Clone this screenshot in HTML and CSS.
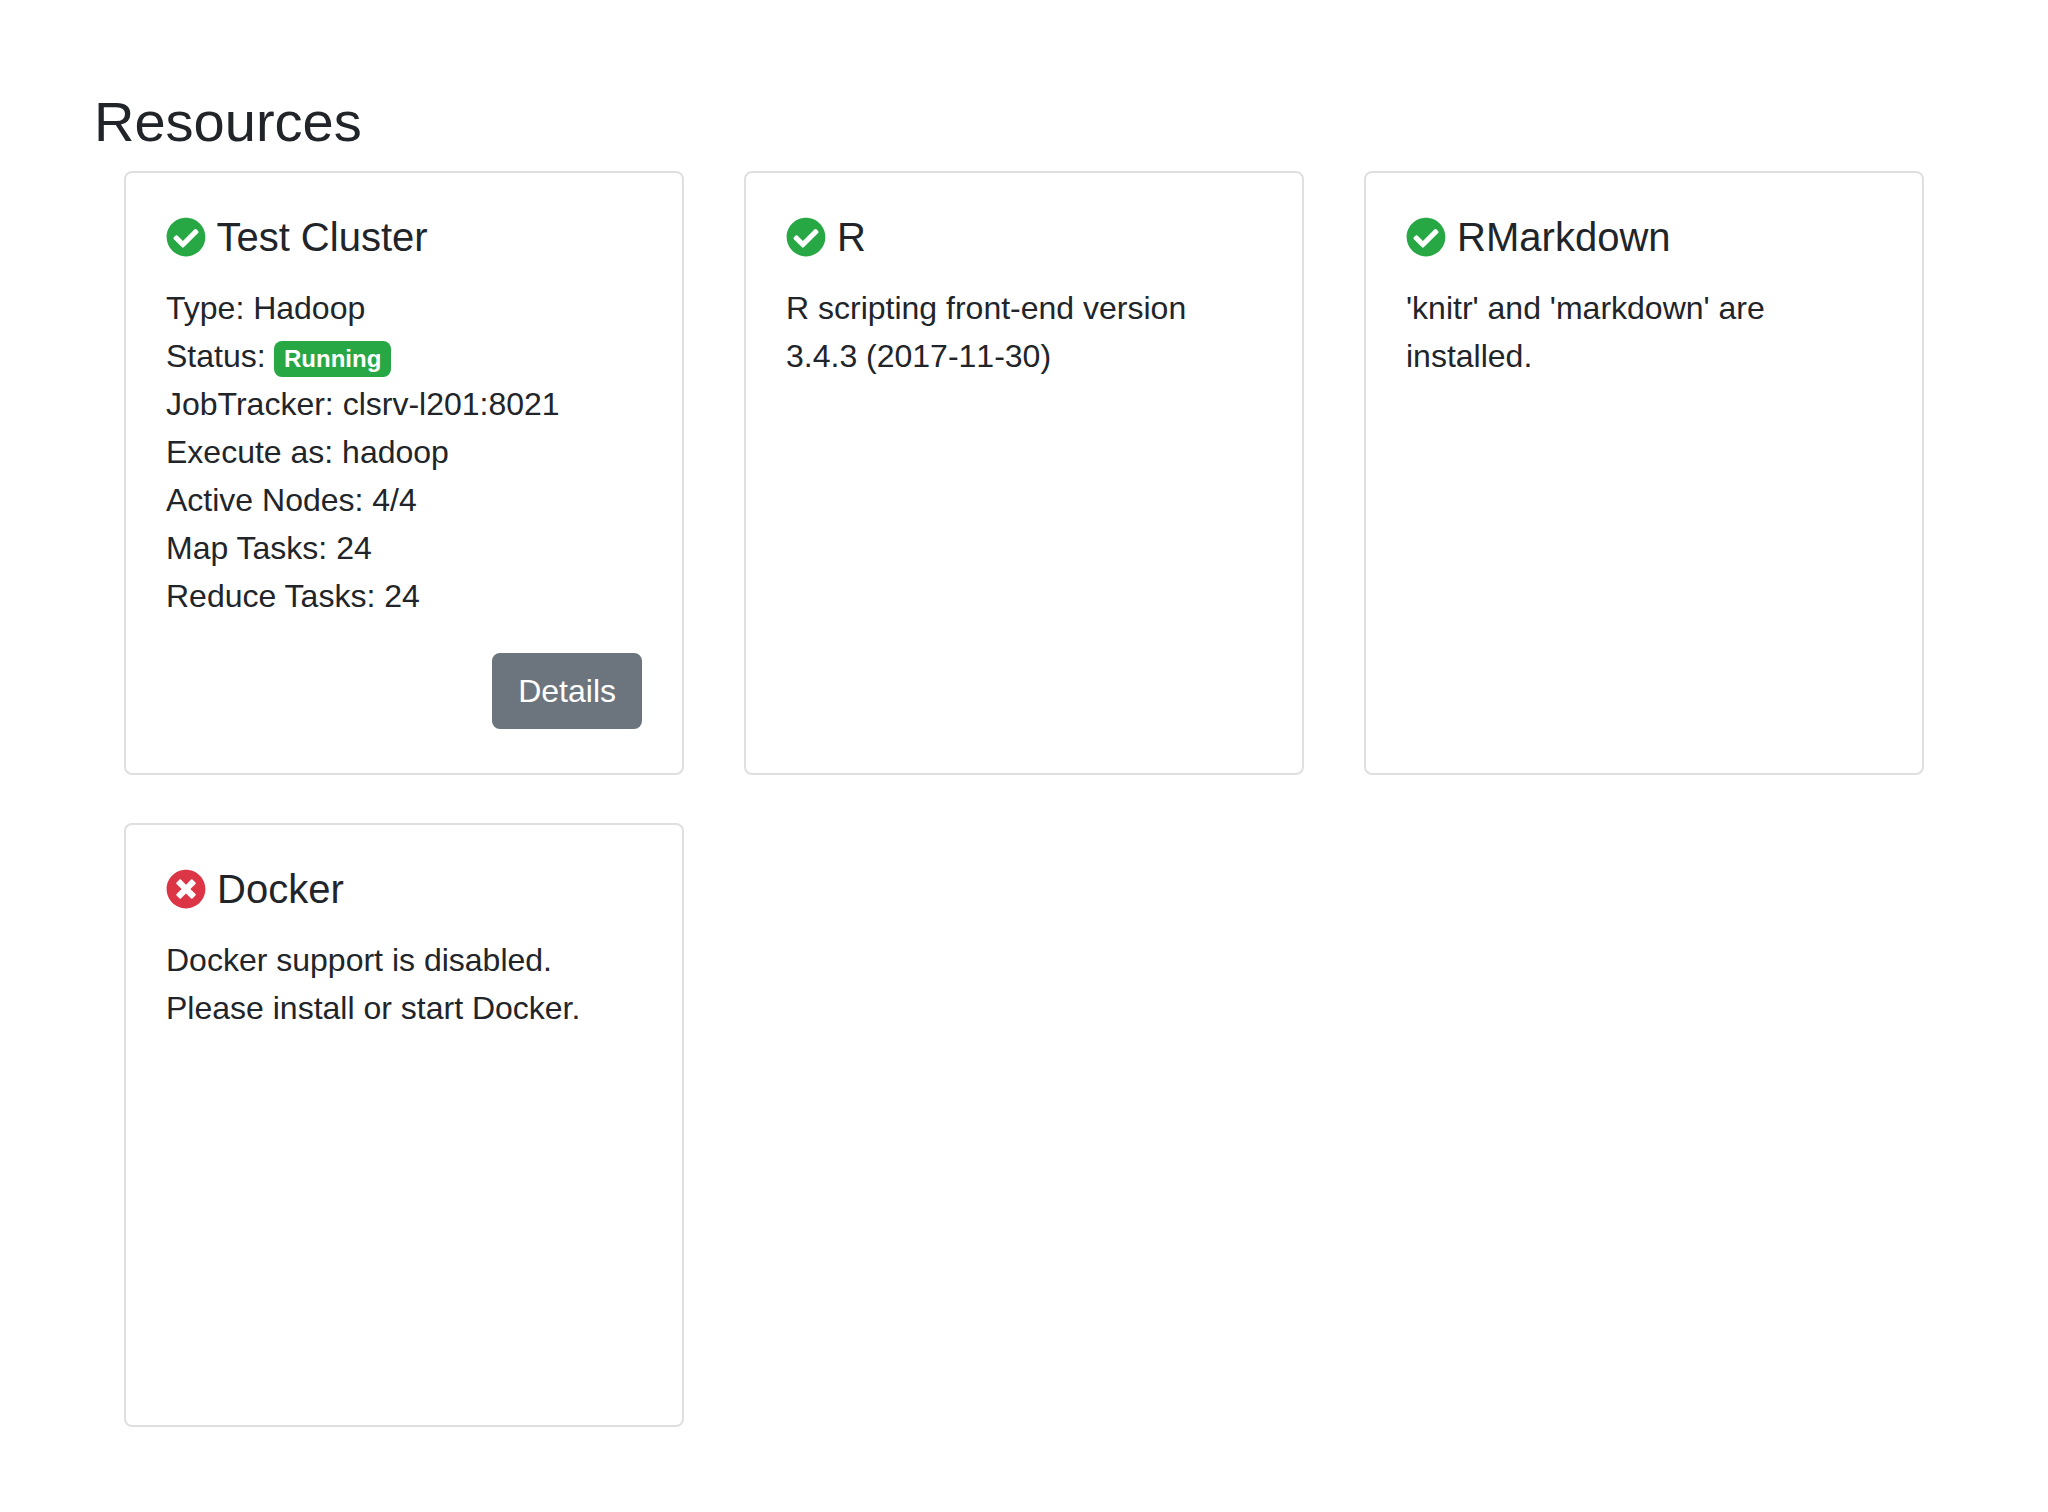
FILE: index.html
```html
<!DOCTYPE html>
<html lang="en">
<head>
<meta charset="utf-8">
<title>Resources</title>
<link rel="stylesheet" href="styles.css">
</head>
<body>
<svg class="sprite" aria-hidden="true">
  <symbol id="check" viewBox="0 0 512 512"><path fill="currentColor" d="M504 256c0 136.967-111.033 248-248 248S8 392.967 8 256 119.033 8 256 8s248 111.033 248 248zM227.314 387.314l184-184c6.248-6.248 6.248-16.379 0-22.627l-22.627-22.627c-6.248-6.249-16.379-6.249-22.628 0L216 308.118l-70.059-70.059c-6.248-6.248-16.379-6.248-22.628 0l-22.627 22.627c-6.248 6.248-6.248 16.379 0 22.627l104 104c6.249 6.249 16.379 6.249 22.628.001z"/></symbol>
  <symbol id="times" viewBox="0 0 512 512"><path fill="currentColor" d="M256 8C119 8 8 119 8 256s111 248 248 248 248-111 248-248S393 8 256 8zm121.6 313.1c4.7 4.7 4.7 12.3 0 17L338 377.6c-4.7 4.7-12.3 4.7-17 0L256 312l-65.1 65.6c-4.7 4.7-12.3 4.7-17 0L134.4 338c-4.7-4.7-4.7-12.3 0-17l65.6-65-65.6-65.1c-4.7-4.7-4.7-12.3 0-17l39.6-39.6c4.7-4.7 12.3-4.7 17 0l65 65.7 65.1-65.6c4.7-4.7 12.3-4.7 17 0l39.6 39.6c4.7 4.7 4.7 12.3 0 17L312 256l65.6 65.1z"/></symbol>
</svg>
<main class="page">
  <h1 class="page-title">Resources</h1>
  <div class="cards">
    <section class="card">
      <h2 class="card-title"><svg class="icon icon-ok"><use href="#check"/></svg> Test Cluster</h2>
      <div class="card-text">
        <div>Type: Hadoop</div>
        <div>Status: <span class="badge">Running</span></div>
        <div>JobTracker: clsrv-l201:8021</div>
        <div>Execute as: hadoop</div>
        <div>Active Nodes: 4/4</div>
        <div>Map Tasks: 24</div>
        <div>Reduce Tasks: 24</div>
      </div>
      <button class="btn" type="button">Details</button>
    </section>
    <section class="card">
      <h2 class="card-title"><svg class="icon icon-ok"><use href="#check"/></svg> R</h2>
      <div class="card-text">R scripting front-end version <span class="version">3.4.3 (2017-11-30)</span></div>
    </section>
    <section class="card">
      <h2 class="card-title"><svg class="icon icon-ok"><use href="#check"/></svg> RMarkdown</h2>
      <div class="card-text">'knitr' and 'markdown' are installed.</div>
    </section>
    <section class="card">
      <h2 class="card-title"><svg class="icon icon-error"><use href="#times"/></svg> Docker</h2>
      <div class="card-text">Docker support is disabled. Please install or start Docker.</div>
    </section>
  </div>
</main>
</body>
</html>
```
FILE: styles.css
```css
* {
  box-sizing: border-box;
}

body {
  margin: 0;
  background: #fff;
  color: #212529;
  font: 32px/48px "Liberation Sans", Arial, sans-serif;
}

.sprite {
  display: none;
}

.page {
  padding: 88px 94px 0;
}

.page-title {
  margin: 0 0 16px;
  font-size: 56px;
  font-weight: 400;
  line-height: 67px;
}

.cards {
  display: grid;
  grid-template-columns: repeat(3, 560px);
  grid-auto-rows: 604px;
  gap: 48px 60px;
  padding: 0 30px;
}

.card {
  display: flex;
  flex-direction: column;
  padding: 40px;
  border: 2px solid rgba(0, 0, 0, 0.125);
  border-radius: 8px;
}

.card-title {
  margin: 0 0 23px;
  font-size: 40px;
  font-weight: 400;
  line-height: 48px;
}

.icon {
  width: 40px;
  height: 40px;
  vertical-align: -6px;
}

.icon-ok {
  color: #28a745;
}

.icon-error {
  color: #dc3545;
}

.version {
  font-kerning: none;
}

.badge {
  display: inline-block;
  margin-left: -0.5px;
  padding: 6px 10px;
  border-radius: 8px;
  background: #28a745;
  color: #fff;
  font-size: 24px;
  font-weight: 700;
  line-height: 24px;
}

.btn {
  align-self: flex-end;
  margin-top: 33px;
  padding: 12px 24px;
  border: 2px solid #6c757d;
  border-radius: 8px;
  background: #6c757d;
  color: #fff;
  font: inherit;
}
```
